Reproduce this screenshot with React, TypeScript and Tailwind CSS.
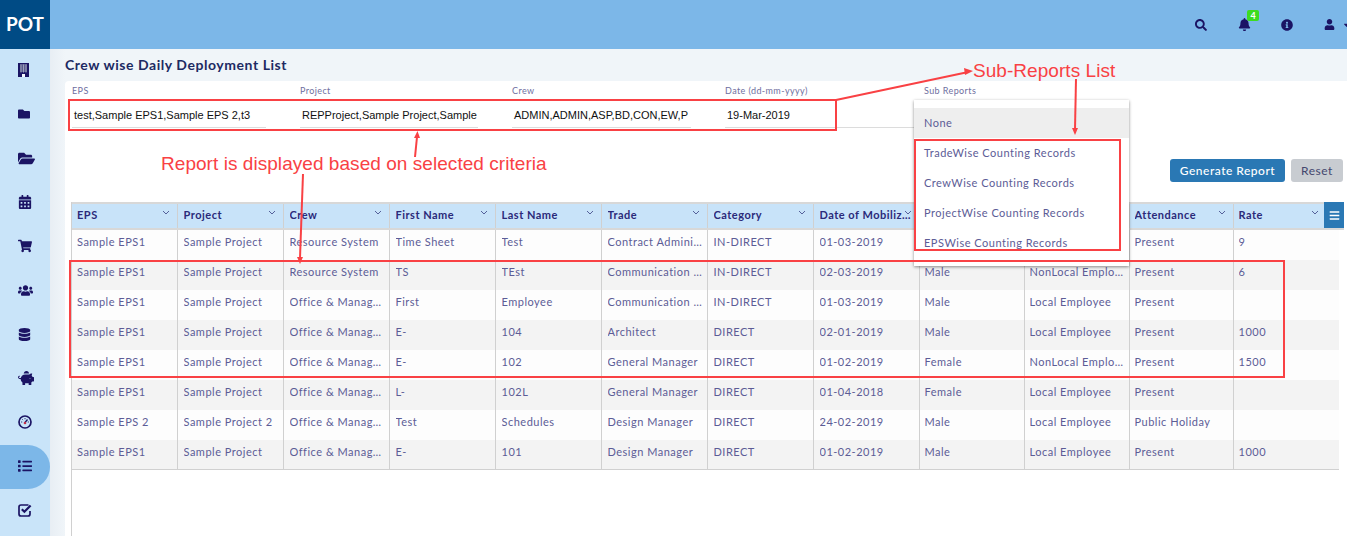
import React from 'react'
import {
  FaBars,
  FaBell,
  FaCalendarAlt,
  FaCaretDown,
  FaDatabase,
  FaFolder,
  FaFolderOpen,
  FaInfoCircle,
  FaList,
  FaPiggyBank,
  FaSearch,
  FaShoppingCart,
  FaUser,
  FaUsers,
} from 'react-icons/fa'

const columns = ['EPS', 'Project', 'Crew', 'First Name', 'Last Name', 'Trade', 'Category', 'Date of Mobilization', 'Gender', 'Employee Type', 'Attendance', 'Rate']

const office = 'Office & Management'
const comm = 'Communication Engineer'
const local = 'Local Employee'
const nonlocal = 'NonLocal Employee'

const rows = [
  ['Sample EPS1', 'Sample Project', 'Resource System', 'Time Sheet', 'Test', 'Contract Administrator', 'IN-DIRECT', '01-03-2019', 'Male', local, 'Present', '9'],
  ['Sample EPS1', 'Sample Project', 'Resource System', 'TS', 'TEst', comm, 'IN-DIRECT', '02-03-2019', 'Male', nonlocal, 'Present', '6'],
  ['Sample EPS1', 'Sample Project', office, 'First', 'Employee', comm, 'IN-DIRECT', '01-03-2019', 'Male', local, 'Present', ''],
  ['Sample EPS1', 'Sample Project', office, 'E-', '104', 'Architect', 'DIRECT', '02-01-2019', 'Male', local, 'Present', '1000'],
  ['Sample EPS1', 'Sample Project', office, 'E-', '102', 'General Manager', 'DIRECT', '01-02-2019', 'Female', nonlocal, 'Present', '1500'],
  ['Sample EPS1', 'Sample Project', office, 'L-', '102L', 'General Manager', 'DIRECT', '01-04-2018', 'Female', local, 'Present', ''],
  ['Sample EPS 2', 'Sample Project 2', office, 'Test', 'Schedules', 'Design Manager', 'DIRECT', '24-02-2019', 'Male', local, 'Public Holiday', ''],
  ['Sample EPS1', 'Sample Project', office, 'E-', '101', 'Design Manager', 'DIRECT', '01-02-2019', 'Male', local, 'Present', '1000'],
]

const filters = [
  { label: 'EPS', value: 'test,Sample EPS1,Sample EPS 2,t3', w: 'w-[194px]', mr: 'mr-[34px]' },
  { label: 'Project', value: 'REPProject,Sample Project,Sample', w: 'w-[178px]', mr: 'mr-[34px]' },
  { label: 'Crew', value: 'ADMIN,ADMIN,ASP,BD,CON,EW,P', w: 'w-[179px]', mr: 'mr-[34px]' },
  { label: 'Date (dd-mm-yyyy)', value: '19-Mar-2019', w: 'w-[189px]', mr: '' },
]

const colWidths = ['w-[105px]', 'w-[106px]', 'w-[106px]', 'w-[106px]', 'w-[106px]', 'w-[106px]', 'w-[106px]', 'w-[106px]', 'w-[105px]', 'w-[105px]', 'w-[104px]']

function BuildingIcon() {
  return (
    <svg width="11" height="14" viewBox="0 0 11 14">
      <rect x="0" y="0" width="11" height="14" fill="#1b1464" />
      <path d="M2 2h7M2 4h7M2 6h7M2 8h7M3 1.500v8M5.500 1.500v8M8 1.500v8" stroke="#9aa0b8" strokeWidth="1" />
      <rect x="4" y="11" width="3" height="3" fill="#f4f8fc" />
    </svg>
  )
}

function GaugeIcon() {
  return (
    <svg width="14" height="14" viewBox="0 0 14 14" fill="none">
      <circle cx="7" cy="7" r="6" stroke="#1b1464" strokeWidth="1.7" />
      <path d="M7 7.500L9.500 4.500" stroke="#1b1464" strokeWidth="1.300" />
      <path d="M3.200 7h1M9.800 7h1M7 3.200v1M4.400 4.400l.7.7" stroke="#1b1464" strokeWidth="1" />
      <circle cx="7" cy="8" r="1.300" fill="#c0304a" />
    </svg>
  )
}

function CheckSquareIcon() {
  return (
    <svg width="14" height="14" viewBox="0 0 14 14" fill="none">
      <path d="M10.500 2H3C1.900 2 1 2.900 1 4v7c0 1.100.9 2 2 2h7c1.100 0 2-.9 2-2V8" stroke="#1b1464" strokeWidth="1.700" />
      <path d="M3.800 6.200L6.400 8.800L12.600 2.400" stroke="#1b1464" strokeWidth="2.200" />
    </svg>
  )
}

const sideIcons = [
  <BuildingIcon />,
  <FaFolder size={12} />,
  <FaFolderOpen size={17} />,
  <FaCalendarAlt size={14} />,
  <FaShoppingCart size={14} />,
  <FaUsers size={15} />,
  <FaDatabase size={13} />,
  <FaPiggyBank size={16} />,
  <GaugeIcon />,
  <FaList size={14} />,
  <CheckSquareIcon />,
]

export default function App() {
  return (
    <div className="relative w-[1347px] h-[536px] overflow-hidden bg-[#f0f5f9] font-['Lato',sans-serif]">
      {/* top bar */}
      <div className="flex h-[49px] bg-[#7cb7e8]">
        <div className="w-[50px] bg-[#004b85] flex items-center justify-center text-white font-bold text-[19px]">POT</div>
        <div className="flex-1 flex items-center justify-end text-[#1b1464]">
          <FaSearch size={12} className="mr-[31px]" />
          <div className="relative mr-[30px]">
            <FaBell size={13} />
            <span className="absolute -top-[8px] left-[9px] w-[12px] h-[11px] rounded-[2px] bg-[#3ddc1f] text-white text-[9px] leading-[11px] font-bold text-center">4</span>
          </div>
          <FaInfoCircle size={12} className="mr-[31px]" />
          <FaUser size={11} />
          <FaCaretDown size={10} className="ml-[7px] -mr-[5px]" />
        </div>
      </div>

      <div className="flex h-[487px]">
        {/* side nav */}
        <div className="w-[50px] shrink-0 bg-[#c9e4f9] text-[#1b1464]">
          {sideIcons.map((icon, i) => (
            <div key={i} className={`h-[44px] flex items-center pl-[18px] pb-[2px] ${i === 9 ? 'bg-[#7cb7e8] rounded-r-[22px]' : ''}`}>
              {icon}
            </div>
          ))}
        </div>

        <div className="w-[15px] shrink-0 bg-gradient-to-r from-[#e8eef4] to-[#f0f5f9]" />

        <div className="flex-1 min-w-0 flex flex-col">
          <h1 className="h-[32px] pt-[7px] text-[14px] leading-[18px] font-bold tracking-[0.55px] text-[#1d2a63]">Crew wise Daily Deployment List</h1>

          <div className="flex-1 bg-white rounded-tl-[4px] pl-[6px] pr-[4px] relative">
            {/* filter form */}
            <div className="flex pt-[4px] pl-[1px] h-[78px]">
              {filters.map((f) => (
                <div key={f.label} className={`${f.w} ${f.mr}`}>
                  <div className="h-[11px] text-[9px] leading-[11px] tracking-[0.4px] text-[#6f6fa0]">{f.label}</div>
                  <div className="mt-[6px] h-[26px] pl-[2px] border-b border-[#dcdcdc] font-['Liberation_Sans',sans-serif] text-[11px] leading-[26px] text-[#111] whitespace-nowrap overflow-hidden">{f.value}</div>
                </div>
              ))}
            </div>

            {/* sub reports */}
            <div className="absolute z-20 left-[849px] top-[4px] w-[215px]">
              <div className="h-[11px] pl-[10px] text-[9px] leading-[11px] tracking-[0.4px] text-[#6f6fa0]">Sub Reports</div>
              <div className="mt-[4px] h-[166px] py-[8px] bg-white shadow-[0_1px_3px_rgba(0,0,0,0.45)] text-[11px] tracking-[0.5px] text-[#5c5c96]">
                <div className="h-[30px] leading-[30px] pl-[10px] bg-[#eeeeee]">None</div>
                <div className="h-[30px] leading-[30px] pl-[10px]">TradeWise Counting Records</div>
                <div className="h-[30px] leading-[30px] pl-[10px]">CrewWise Counting Records</div>
                <div className="h-[30px] leading-[30px] pl-[10px]">ProjectWise Counting Records</div>
                <div className="h-[30px] leading-[30px] pl-[10px]">EPSWise Counting Records</div>
              </div>
            </div>

            {/* actions */}
            <div className="flex justify-end gap-[6px] h-[43px]">
              <button className="w-[115px] h-[23px] rounded-[3px] bg-[#2a78b4] text-white text-[12px] tracking-[0.5px] font-medium">Generate Report</button>
              <button className="w-[52px] h-[23px] rounded-[3px] bg-[#c8ccd1] text-[#44476e] text-[12px] tracking-[0.5px]">Reset</button>
            </div>

            {/* grid */}
            <div className="relative h-[334px] w-[1273px] border-l border-[#d0d0d0] text-[11px] tracking-[0.5px]">
              <div className="absolute right-0 top-0 w-[20px] h-[26px] bg-[#2a78b4] text-white flex items-center justify-center z-10">
                <FaBars size={11} />
              </div>
              <table className="table-fixed border-collapse w-[1272px]">
                <colgroup>
                  {colWidths.map((w, i) => (
                    <col key={i} className={w} />
                  ))}
                  <col className="w-[111px]" />
                </colgroup>
                <thead>
                  <tr className="h-[26px] bg-[#c8e3f9] border-y-2 border-t-[#d8d8d8] border-b-[#d8d8d8]">
                    {columns.map((c, i) => (
                      <th key={c} className={`relative pr-[5px] pb-[1px] text-left font-bold text-[#2b2a7a] border-r border-[#d0d0d0] last:border-r-0 ${i === 0 || i >= 8 ? 'pl-[5px]' : 'pl-[6px]'}`}>
                        <div className="truncate pr-[1px]">{c}</div>
                        <svg className={`absolute top-[6px] ${i === 11 ? 'right-[25px]' : 'right-[7px]'}`} width="8" height="5" viewBox="0 0 8 5" fill="none">
                          <path d="M1 1l3 3 3-3" stroke="#55619a" strokeWidth="1" />
                        </svg>
                      </th>
                    ))}
                  </tr>
                </thead>
              </table>
              <table className="table-fixed border-collapse w-[1267px]">
                <colgroup>
                  {colWidths.map((w, i) => (
                    <col key={i} className={w} />
                  ))}
                  <col className="w-[106px]" />
                </colgroup>
                <tbody>
                  {rows.map((r, i) => (
                    <tr key={i} className={`h-[30px] ${i % 2 ? 'bg-[#f3f3f3]' : 'bg-[#fdfdfd]'}`}>
                      {r.map((cell, j) => (
                        <td key={j} className={`pr-[3px] pb-[6px] text-[#5c5c96] border-r border-[#d0d0d0] ${j === 0 || j >= 8 ? 'pl-[5px]' : 'pl-[6px]'} ${j === 11 ? 'border-r-0' : ''}`}>
                          <div className="truncate">{cell}</div>
                        </td>
                      ))}
                    </tr>
                  ))}
                </tbody>
              </table>
              <div className="w-[1267px] -mt-px border-t border-[#d0d0d0]" />
            </div>
          </div>
        </div>
      </div>

      {/* annotations laid over the screenshot */}
      <div className="absolute z-30 left-[68px] top-[99px] w-[769px] h-[32px] border-2 border-[#f94144]" />
      <div className="absolute z-30 left-[69px] top-[260px] w-[1216px] h-[118px] border-2 border-[#f94144]" />
      <div className="absolute z-30 left-[914px] top-[139px] w-[207px] h-[112px] border-2 border-[#f94144]" />
      <svg className="absolute z-30 left-0 top-0" width="1347" height="536" fill="none">
        <path d="M836 100L966 72.500" stroke="#f94144" strokeWidth="2" />
        <path d="M973 71l-9-3 1 7z" fill="#f94144" />
        <path d="M415 157L417 137" stroke="#f94144" strokeWidth="2" />
        <path d="M417.500 131l-3.500 7h6z" fill="#f94144" />
        <path d="M303 174L300 258" stroke="#f94144" strokeWidth="2" />
        <path d="M300 264l-3-7h6z" fill="#f94144" />
        <path d="M1076 79L1075 129" stroke="#f94144" strokeWidth="2" />
        <path d="M1075 135l-3-7h6z" fill="#f94144" />
      </svg>
      <div className="absolute z-30 left-[973px] top-[60px] font-['Liberation_Sans',sans-serif] text-[19px] leading-[22px] tracking-[0.05px] text-[#f94144] whitespace-nowrap">Sub-Reports List</div>
      <div className="absolute z-30 left-[161px] top-[153px] font-['Liberation_Sans',sans-serif] text-[19px] leading-[22px] tracking-[0.05px] text-[#f94144] whitespace-nowrap">Report is displayed based on selected criteria</div>
    </div>
  )
}
